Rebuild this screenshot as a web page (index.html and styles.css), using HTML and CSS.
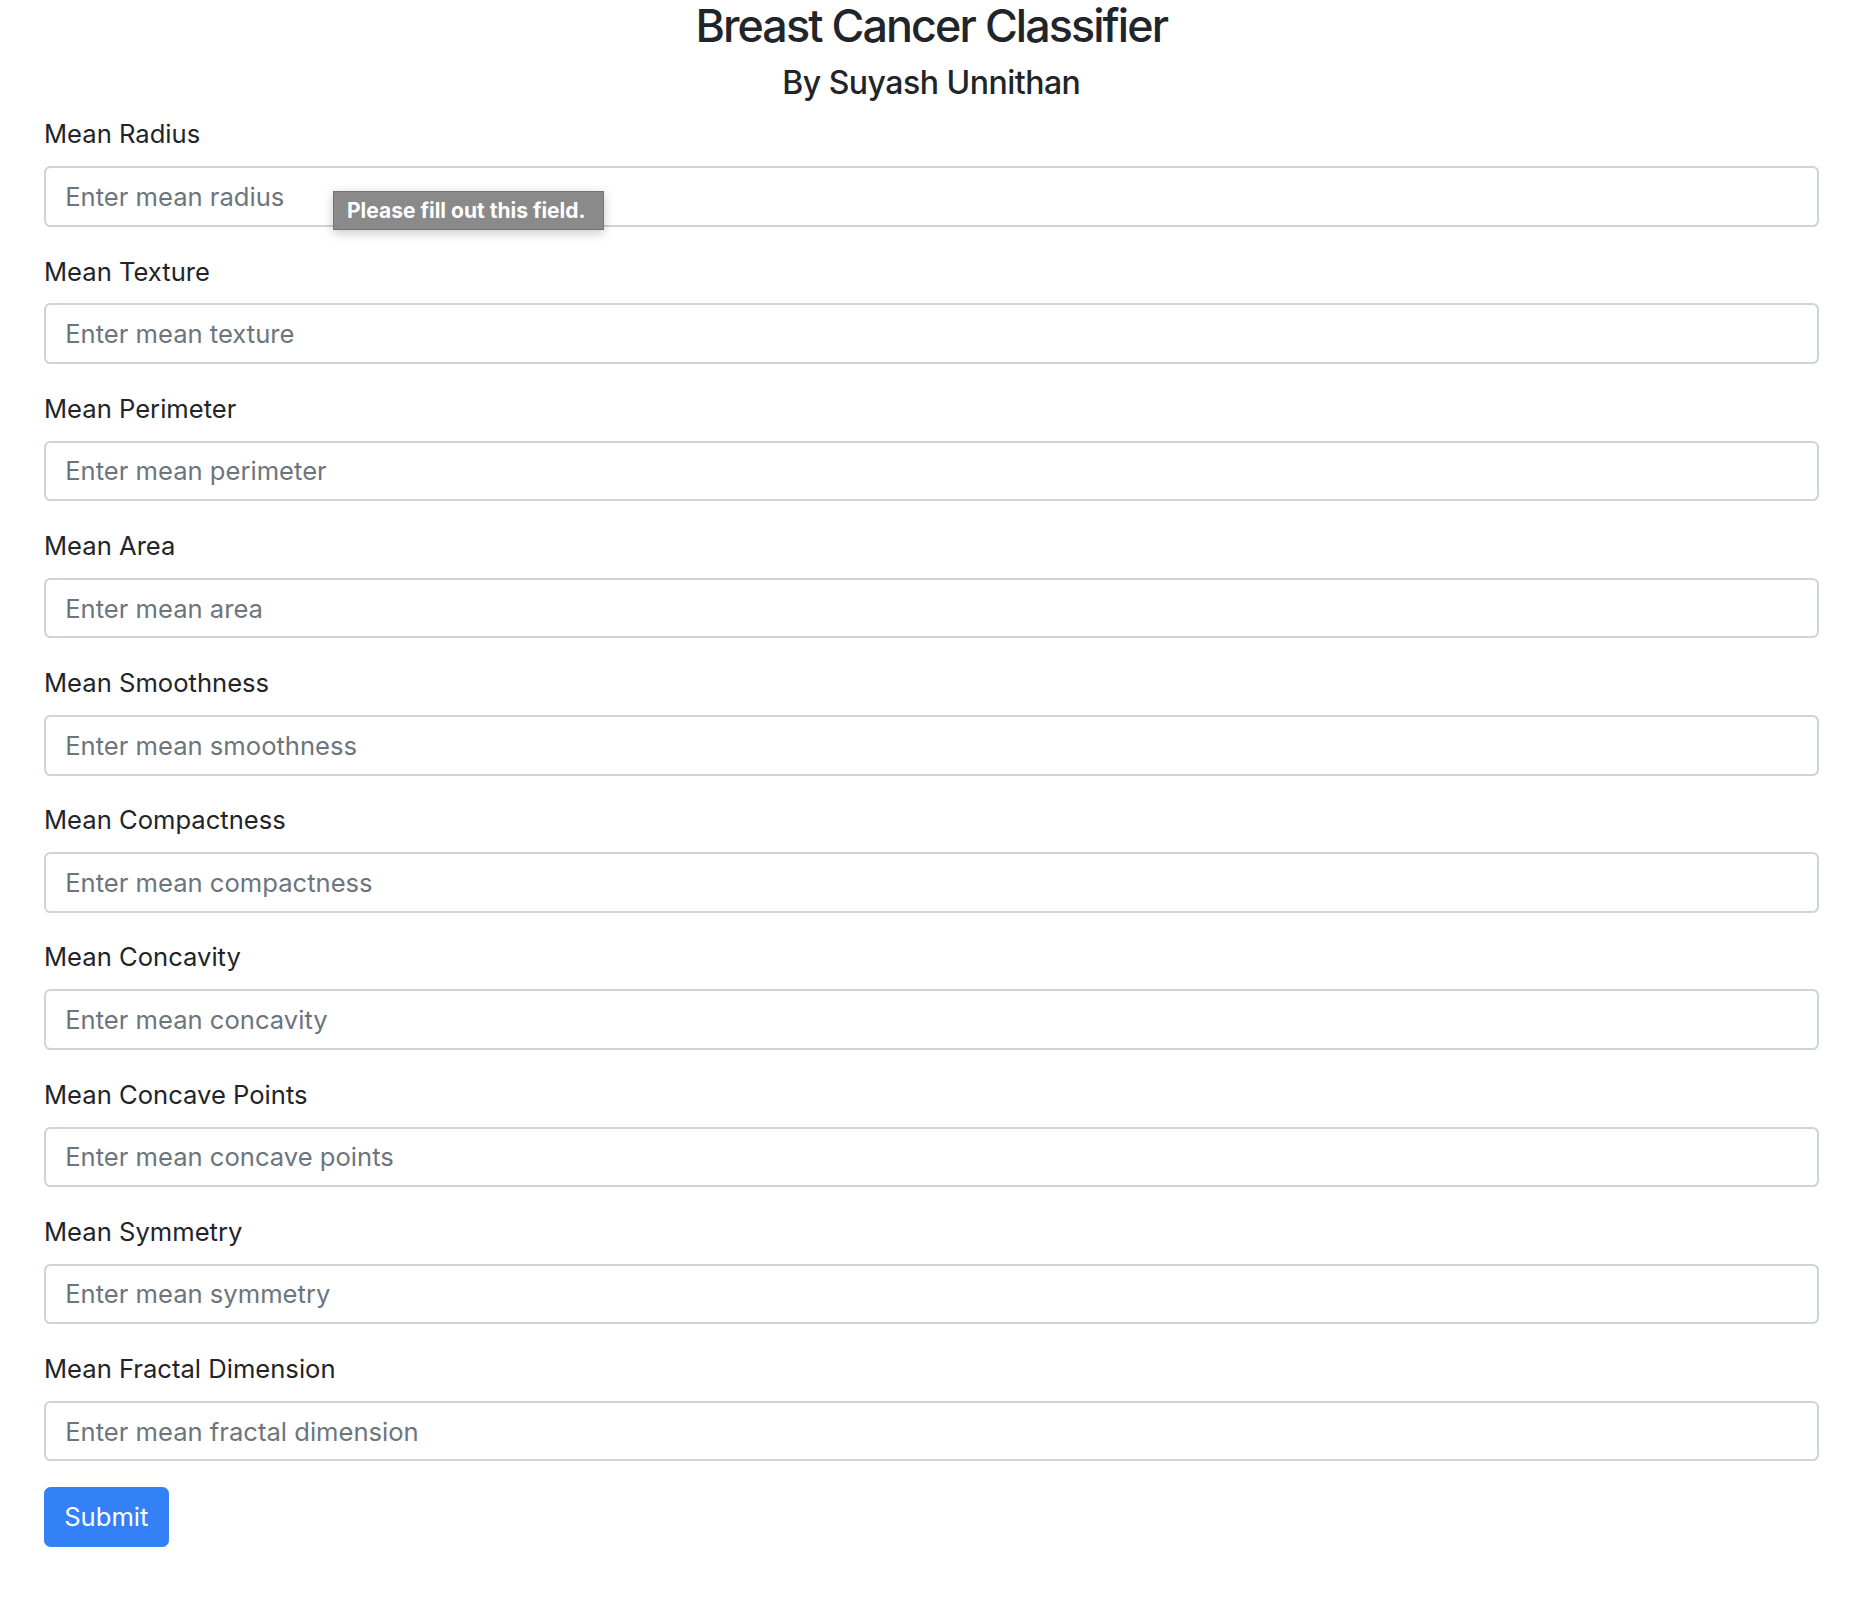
FILE: index.html
```html
<!DOCTYPE html>
<html lang="en">
<head>
<meta charset="utf-8">
<title>Breast Cancer Classifier</title>
<link rel="stylesheet" href="styles.css">
</head>
<body>
<div class="page">
  <h3 class="title">Breast Cancer Classifier</h3>
  <h5 class="subtitle">By Suyash Unnithan</h5>
  <form class="form">
    <div class="group">
      <label class="label" for="f1">Mean Radius</label>
      <input class="control" id="f1" type="text" placeholder="Enter mean radius">
      <div class="tip">Please fill out this field.</div>
    </div>
    <div class="group">
      <label class="label" for="f2">Mean Texture</label>
      <input class="control" id="f2" type="text" placeholder="Enter mean texture">
    </div>
    <div class="group">
      <label class="label" for="f3">Mean Perimeter</label>
      <input class="control" id="f3" type="text" placeholder="Enter mean perimeter">
    </div>
    <div class="group">
      <label class="label" for="f4">Mean Area</label>
      <input class="control" id="f4" type="text" placeholder="Enter mean area">
    </div>
    <div class="group">
      <label class="label" for="f5">Mean Smoothness</label>
      <input class="control" id="f5" type="text" placeholder="Enter mean smoothness">
    </div>
    <div class="group">
      <label class="label" for="f6">Mean Compactness</label>
      <input class="control" id="f6" type="text" placeholder="Enter mean compactness">
    </div>
    <div class="group">
      <label class="label" for="f7">Mean Concavity</label>
      <input class="control" id="f7" type="text" placeholder="Enter mean concavity">
    </div>
    <div class="group">
      <label class="label" for="f8">Mean Concave Points</label>
      <input class="control" id="f8" type="text" placeholder="Enter mean concave points">
    </div>
    <div class="group">
      <label class="label" for="f9">Mean Symmetry</label>
      <input class="control" id="f9" type="text" placeholder="Enter mean symmetry">
    </div>
    <div class="group">
      <label class="label" for="f10">Mean Fractal Dimension</label>
      <input class="control" id="f10" type="text" placeholder="Enter mean fractal dimension">
    </div>
    <button class="btn" type="button">Submit</button>
  </form>
</div>
</body>
</html>
```
FILE: styles.css
```css
* { box-sizing: border-box; }
html, body { margin: 0; padding: 0; background: #fff; }
body {
  font-family: Inter, "Noto Sans", "Liberation Sans", sans-serif;
  color: #212529;
  font-size: 25.6px;
  line-height: 1.5;
}
.page {
  padding: 0 55.5px 60px 44px;
}
.title {
  margin: 0 0 10.4px;
  font-size: 44.8px;
  font-weight: 450;
  line-height: 1.2;
  letter-spacing: -1.9px;
  text-align: center;
}
.subtitle {
  margin: 0 0 12.8px;
  font-size: 32px;
  font-weight: 500;
  line-height: 1.2;
  letter-spacing: -0.5px;
  text-align: center;
}
.form { display: block; }
.group {
  position: relative;
  margin-bottom: 25.6px;
}
.label {
  display: block;
  height: 38.2px;
  line-height: 38.2px;
  margin-bottom: 12.8px;
}
.control {
  display: block;
  width: 100%;
  height: 60.6px;
  padding: 9.6px 19.2px;
  font-family: inherit;
  font-size: 25.6px;
  line-height: 1.5;
  color: #495057;
  background: #fff;
  border: 2px solid #ced4da;
  border-radius: 6.4px;
  outline: none;
}
.control::placeholder { color: #6c757d; opacity: 1; }
.tip {
  position: absolute;
  left: 289px;
  top: 76px;
  width: 271px;
  height: 39px;
  padding-left: 13px;
  background: #8a8a8a;
  border: 1px solid #737373;
  color: #fff;
  font-size: 21px;
  font-weight: 700;
  line-height: 37px;
  white-space: nowrap;
  box-shadow: 0 3px 10px rgba(0,0,0,0.22);
}
.btn {
  display: inline-block;
  height: 60px;
  padding: 0 19.2px;
  font-family: inherit;
  font-size: 25.6px;
  line-height: 1.5;
  color: #fff;
  background: #3380f7;
  border: 1.6px solid #3380f7;
  border-radius: 6.4px;
  cursor: pointer;
}
```
